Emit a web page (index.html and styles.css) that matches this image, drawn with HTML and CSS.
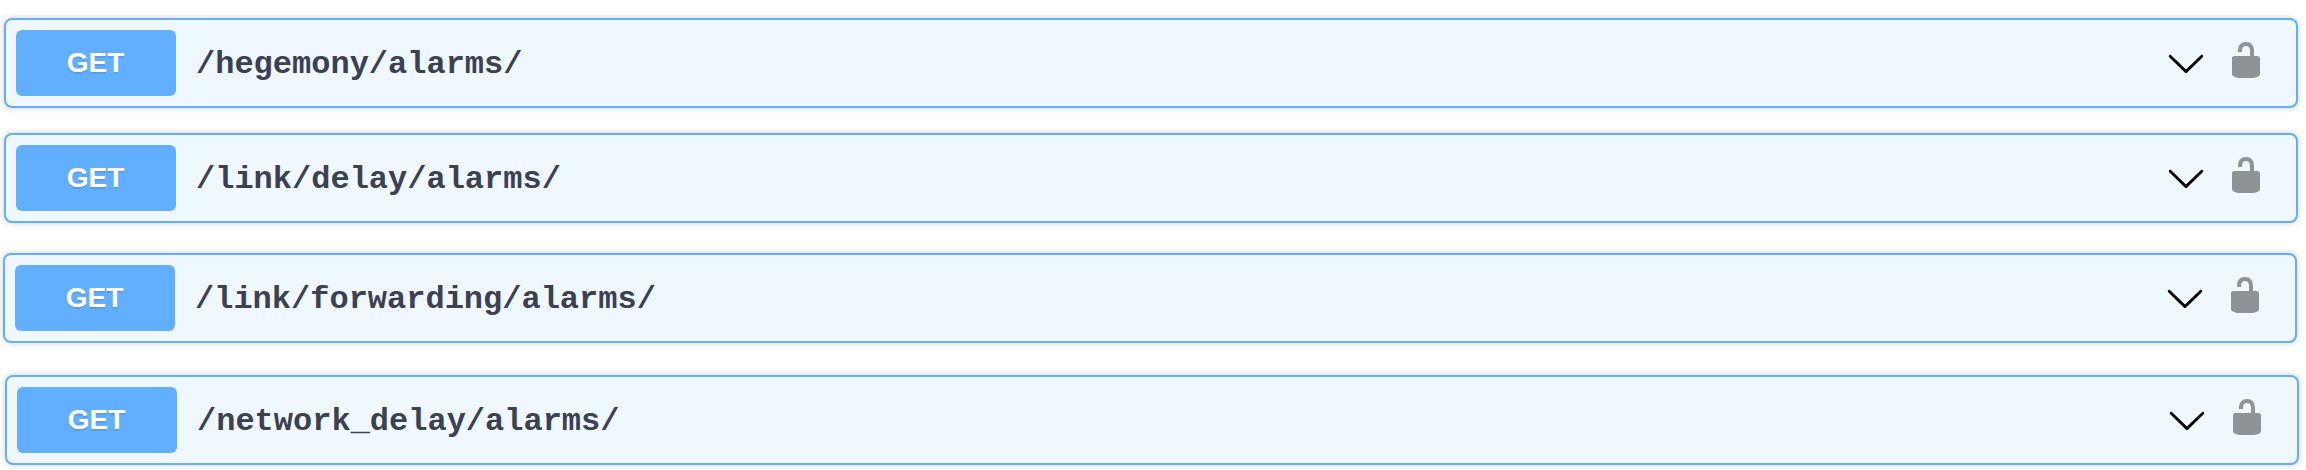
FILE: index.html
```html
<!DOCTYPE html>
<html lang="en">
<head>
<meta charset="utf-8">
<title>API operations</title>
<link rel="stylesheet" href="styles.css">
</head>
<body>
<svg class="defs" aria-hidden="true">
  <symbol id="arrow" viewBox="0 0 20 20"><path d="M17.418 6.109c.272-.268.709-.268.979 0s.271.701 0 .969l-7.908 7.83c-.27.268-.707.268-.979 0l-7.908-7.83c-.27-.268-.27-.701 0-.969.271-.268.709-.268.979 0L10 13.25l7.418-7.141z"/></symbol>
  <symbol id="unlocked" viewBox="0 0 20 20"><path d="M15.8 8H14V5.6C14 2.703 12.665 1 10 1 7.334 1 6 2.703 6 5.6V6h2v-.801C8 3.754 8.797 3 10 3c1.203 0 2 .754 2 2.199V8H4c-.553 0-1 .646-1 1.199V17c0 .549.428 1.139.951 1.307l1.197.387C5.672 18.861 6.55 19 7.1 19h5.8c.549 0 1.428-.139 1.951-.307l1.196-.387c.524-.167.953-.757.953-1.306V9.199C17 8.646 16.352 8 15.8 8z"/></symbol>
</svg>
<main class="operations">
  <div class="operation">
    <span class="method">GET</span><span class="path">/hegemony/alarms/</span>
    <svg class="arrow"><use href="#arrow"/></svg><svg class="lock"><use href="#unlocked"/></svg>
  </div>
  <div class="operation operation-link-delay">
    <span class="method">GET</span><span class="path">/link/delay/alarms/</span>
    <svg class="arrow"><use href="#arrow"/></svg><svg class="lock"><use href="#unlocked"/></svg>
  </div>
  <div class="operation operation-forwarding">
    <span class="method">GET</span><span class="path">/link/forwarding/alarms/</span>
    <svg class="arrow"><use href="#arrow"/></svg><svg class="lock"><use href="#unlocked"/></svg>
  </div>
  <div class="operation operation-network">
    <span class="method">GET</span><span class="path">/network_delay/alarms/</span>
    <svg class="arrow"><use href="#arrow"/></svg><svg class="lock"><use href="#unlocked"/></svg>
  </div>
</main>
</body>
</html>
```
FILE: styles.css
```css
* { box-sizing: border-box; }
body { margin: 0; background: #fff; }
.defs { display: none; }
.operations { display: flex; flex-direction: column; padding-top: 18px; height: 470px; }
.operation {
  display: flex;
  align-items: center;
  flex: none;
  height: 90px;
  margin: 0 8px 0 4px;
  padding: 10px 30px 10px 10px;
  border: 2px solid #61affe;
  border-radius: 8px;
  background: #eff7ff;
  box-shadow: 0 0 6px rgba(0, 0, 0, .19);
}
.operation-link-delay { margin-top: 25px; }
.operation-forwarding { margin: 30px 9px 0 3px; }
.operation-network { margin: 32px 7px 0 5px; }
.method {
  width: 160px;
  height: 66px;
  padding-right: 1px;
  border-radius: 6px;
  background: #61affe;
  color: #fff;
  font: bold 28px/66px "Liberation Sans", Arial, sans-serif;
  text-align: center;
  text-shadow: 0 2px 0 rgba(0, 0, 0, .1);
}
.path {
  flex: 1;
  padding: 4px 0 0 20px;
  color: #3b4151;
  font: bold 32px/40px "Liberation Mono", "Courier New", monospace;
}
.arrow, .lock { width: 40px; height: 40px; flex: none; }
.lock { margin: 0 0 6px 20px; opacity: .4; }
```
